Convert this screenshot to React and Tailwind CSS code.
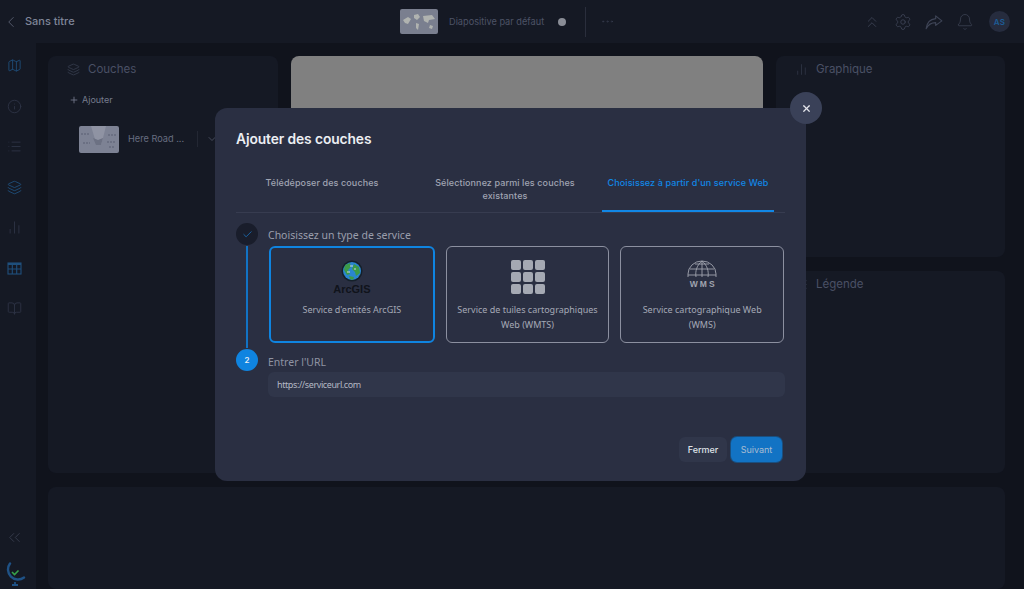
import { Map, Info, List, Layers, ChartNoAxesColumn, BookOpen, ChevronsLeft, ChevronsUp, ChevronLeft, ChevronDown, Settings, Bell, Plus, X, Check, Ellipsis } from "lucide-react";

const sans = "font-['Inter','Liberation_Sans',sans-serif]";
const body = "font-['Noto_Sans','Liberation_Sans',sans-serif]";

const MapThumb = ({ className }) => (
  <svg viewBox="0 0 40 27" className={className} preserveAspectRatio="none">
    <rect width="40" height="27" rx="2" fill="#7d8294" />
    <path d="M12 0h15l-3 12-2 7h-4l-3-9z" fill="#8f93a3" />
    <path d="M14 12l3 7h5l2-7-5 2z" fill="#6c7183" />
    <path d="M2 8h9M29 9h8M4 17h7M28 16h9M30 21h6" stroke="#666b7d" strokeWidth="1.5" strokeDasharray="2 1" />
  </svg>
);

const SlideThumb = () => (
  <svg viewBox="0 0 38 25" className="w-[38px] h-[25px]">
    <rect width="38" height="25" rx="2" fill="#7a7f8f" />
    <path d="M3 11l5-3 3 2-3 5-3-1zM14 6l4-1 2 3-3 3-3-2zM16 14l3 1-1 6-2-2zM23 7l9-1 3 4-6 1-1 3-4-2zM30 16l3 1-1 3-3-1z" fill="#b0b3b0" />
  </svg>
);

const TableIcon = ({ className }) => (
  <svg viewBox="0 0 15 15" className={className} fill="none" stroke="currentColor" strokeWidth="1.1">
    <rect x="1" y="2" width="13" height="11" />
    <path d="M1 3h13" strokeWidth="2" />
    <path d="M1 8h13M5.3 2v11M9.7 2v11" />
  </svg>
);

const sideIcons = [
  { Icon: Map, color: "text-[#1f4f7c]" },
  { Icon: Info, color: "text-[#2e3446]" },
  { Icon: List, color: "text-[#2e3446]" },
  { Icon: Layers, color: "text-[#1f4f7c]" },
  { Icon: ChartNoAxesColumn, color: "text-[#2e3446]" },
  { Icon: TableIcon, color: "text-[#1f4f7c]" },
  { Icon: BookOpen, color: "text-[#2e3446]" },
];

const Sidebar = () => (
  <aside className="w-[36px] shrink-0 bg-[#151924] flex flex-col items-center pt-[15px] pb-[2px] pr-[7px]">
    <div className="flex flex-col gap-[25.5px]">
      {sideIcons.map(({ Icon, color }, i) => (
        <Icon key={i} size={15} strokeWidth={1.4} className={`w-[15px] h-[15px] ${color}`} />
      ))}
    </div>
    <div className="mt-auto flex flex-col items-center gap-[15px]">
      <ChevronsLeft size={19} strokeWidth={1} className="text-[#3d4254]" />
      <svg viewBox="0 0 22 25" className="w-[22px] h-[25px]">
        <path d="M6 1.5a10 10 0 0 0 14 14" fill="none" stroke="#1f5286" strokeWidth="2.4" strokeLinecap="round" />
        <path d="M8 10l2.5 2.5 4-4" fill="none" stroke="#37a24a" strokeWidth="1.6" />
        <path d="M11 20v2M8 23h6" stroke="#1f5286" strokeWidth="1.8" />
      </svg>
    </div>
  </aside>
);

const Panel = ({ className = "", children }) => (
  <div className={`bg-[#151924] rounded-lg ${className}`}>{children}</div>
);

const ServiceCard = ({ active, icon, label }) => (
  <div className={`flex-1 h-[97px] rounded-md flex flex-col items-center ${active ? "border-2 border-[#0f84e0] pt-[12px]" : "border border-[#8c90a0] pt-[13px]"}`}>
    <div className="h-[42px] flex items-start justify-center">{icon}</div>
    <p className={`px-1 text-[9px] leading-[15px] text-[#a5a9b6] text-center whitespace-nowrap ${body}`}>{label}</p>
  </div>
);

const ArcgisIcon = () => (
  <div className="flex flex-col items-center">
    <svg viewBox="0 0 22 22" className="w-[22px] h-[22px]">
      <circle cx="11" cy="11" r="10.5" fill="#15202a" />
      <circle cx="11" cy="11" r="9" fill="#2a86cf" />
      <path d="M4 5l5-2 1 4-3 3 2 4-3 1-3-5zM13 4l5 3 1 6-4 3-1-4-3-3zM8 16l5 1-1 3-3-1z" fill="#3c9a48" />
      <path d="M9 6h3M6 12h3M13 9h2" stroke="#c7d6e2" strokeWidth="1" />
    </svg>
    <span className="mt-[1px] text-[11px] leading-[12px] font-bold text-[#10131b] font-['Liberation_Sans',sans-serif]">ArcGIS</span>
  </div>
);

const TilesIcon = () => (
  <div className="grid grid-cols-3 gap-[2px]">
    {Array.from({ length: 9 }).map((_, i) => (
      <div key={i} className="w-[10px] h-[10px] rounded-[2px] bg-[#a5a9b3]" />
    ))}
  </div>
);

const WmsIcon = () => (
  <div className="flex flex-col items-center">
    <svg viewBox="0 0 30 18" className="w-[30px] h-[18px]" fill="none" stroke="#a0a4af" strokeWidth="0.9">
      <path d="M1 17v-3a14 13 0 0 1 28 0v3" />
      <path d="M9 17c-1-6 1-12 6-16 5 4 7 10 6 16M15 1v16M1 15h28M3 9h24M8 4h14" />
    </svg>
    <span className="mt-[1px] text-[8.5px] leading-[10px] font-bold tracking-[2px] pl-[2px] text-[#a0a4af] font-['Liberation_Sans',sans-serif]">WMS</span>
  </div>
);

const Tab = ({ active, className = "", children }) => (
  <div className={`h-[42px] pt-[6px] text-center text-[9px] leading-[13px] font-medium tracking-[0.1px] ${active ? "text-[#1187e6] border-b-2 border-[#1187e6]" : "text-[#a0a4b2]"} ${className}`}>
    {children}
  </div>
);

const AddLayersModal = () => (
  <div className="absolute left-[215px] top-[108px] w-[591px] h-[373px] rounded-xl bg-[#2a2f42] pl-[21px] pr-[21px] pt-[22px]">
    <h2 className="text-[13.8px] leading-[18px] font-semibold text-[#eceef2] tracking-[-0.1px]">Ajouter des couches</h2>

    <div className="mt-[22px] flex items-stretch border-b border-[#373c50]">
      <Tab className="w-[172px]">Télédéposer des couches</Tab>
      <Tab className="w-[194px]">Sélectionnez parmi les couches<br />existantes</Tab>
      <Tab active className="w-[172px]">Choisissez à partir d'un service Web</Tab>
    </div>

    <div className="flex mt-[10px]">
      <div className="w-[22px] shrink-0 flex flex-col items-center">
        <div className="w-[22px] h-[22px] rounded-full bg-[#191d2b] flex items-center justify-center">
          <Check size={11} strokeWidth={1.6} className="text-[#1a78c8]" />
        </div>
        <div className="w-[2px] h-[102px] bg-[#1273c4] my-[1px]" />
        <div className="w-[22px] h-[22px] rounded-full bg-[#0f84e0] flex items-center justify-center text-[8px] font-semibold text-[#e8eef5]">2</div>
      </div>

      <div className="ml-[10px] flex-1">
        <p className={`text-[10.5px] leading-[14px] mt-[5px] text-[#9a9eac] ${body}`}>Choisissez un type de service</p>
        <div className="mt-[4px] flex gap-[11px] pl-[1px] pr-[1px]">
          <ServiceCard active icon={<ArcgisIcon />} label="Service d'entités ArcGIS" />
          <ServiceCard icon={<TilesIcon />} label={<>Service de tuiles cartographiques<br />Web (WMTS)</>} />
          <ServiceCard icon={<WmsIcon />} label={<>Service cartographique Web<br />(WMS)</>} />
        </div>
        <p className={`mt-[12px] text-[10.5px] leading-[14px] text-[#8f93a2] ${body}`}>Entrer l'URL</p>
        <div className={`mt-[3px] h-[25px] rounded-md bg-[#30364a] flex items-center px-[9px] text-[9px] tracking-[-0.4px] text-[#b4b8c4] ${body}`}>https://serviceurl.com</div>
      </div>
    </div>

    <div className="mt-[40px] flex justify-end gap-[4px] pr-[3px]">
      <button className="w-[48px] h-[25px] rounded-md bg-[#30364a] text-[9px] font-medium text-[#dfe2e8]">Fermer</button>
      <button className="w-[51px] h-[25px] rounded-md bg-[#1273c4] text-[9px] text-[#a9bdd2] ring-1 ring-[#1a4f80]">Suivant</button>
    </div>
  </div>
);

export default function App() {
  return (
    <div className={`relative w-[1024px] h-[589px] overflow-hidden bg-[#10131c] flex flex-col ${sans}`}>
      <header className="h-[43px] shrink-0 bg-[#151924] flex items-center pl-[2px] pr-[14px]">
        <ChevronLeft size={18} strokeWidth={1.2} className="text-[#5a6072]" />
        <span className="ml-[5px] w-[375px] text-[11px] font-medium text-[#7f8598]">Sans titre</span>
        <SlideThumb />
        <span className="ml-[11px] text-[9.2px] text-[#4d5366]">Diapositive par défaut</span>
        <span className="ml-[14px] w-[8px] h-[8px] rounded-full bg-[#8a8d96]" />
        <span className="ml-[19px] w-px h-[30px] bg-[#2a2e3c]" />
        <Ellipsis size={15} strokeWidth={1} className="ml-[14px] text-[#383d4e]" />
        <div className="ml-auto flex items-center gap-[13px] text-[#3e4456]">
          <ChevronsUp size={18} strokeWidth={1.1} />
          <Settings size={18} strokeWidth={1.1} />
          <svg viewBox="0 0 16 16" className="w-[18px] h-[18px]" fill="none" stroke="currentColor" strokeWidth="1">
            <path d="M9.5 2.5L15 7l-5.5 4V8.5C6 8.5 3 10 1 14c.5-5 3.5-8.5 8.5-9z" strokeLinejoin="round" />
          </svg>
          <Bell size={18} strokeWidth={1} />
          <span className="ml-[2px] w-[21px] h-[21px] rounded-full bg-[#262c3e] flex items-center justify-center text-[8px] font-semibold tracking-[0.4px] text-[#1d5c96]">AS</span>
        </div>
      </header>

      <div className="flex flex-1 min-h-0">
        <Sidebar />
        <main className="flex-1 min-w-0 pl-[12px] pr-[19px] pt-[13px] flex flex-col gap-[14px]">
          <div className="flex gap-[13px] h-[417px]">
            <Panel className="w-[230px] shrink-0 pl-[19px] pt-[5px]">
              <div className="flex items-center gap-[8px] text-[#3e4558]">
                <Layers size={13} strokeWidth={1.2} />
                <span className="text-[11.5px] text-[#4a5064]">Couches</span>
              </div>
              <div className="mt-[15px] ml-[2px] flex items-center gap-[3px] text-[#767c8e]">
                <Plus size={10} strokeWidth={2} />
                <span className="text-[9px]">Ajouter</span>
              </div>
              <div className="mt-[19px] ml-[12px] flex items-center">
                <MapThumb className="w-[40px] h-[27px]" />
                <span className="ml-[9px] text-[9.2px] text-[#676d80]">Here Road ...</span>
                <span className="ml-[13px] w-px h-[16px] bg-[#232733]" />
                <ChevronDown size={12} strokeWidth={1.4} className="ml-[8px] text-[#5a6072]" />
              </div>
            </Panel>
            <div className="w-[472px] shrink-0 rounded-lg bg-[#808080]" />
            <div className="flex-1 flex flex-col gap-[14px]">
              <Panel className="h-[201px] shrink-0 pl-[19px] pt-[5px]">
                <div className="flex items-center gap-[8px] text-[#3a4053]">
                  <ChartNoAxesColumn size={13} strokeWidth={1.1} />
                  <span className="text-[11.5px] text-[#4a5064]">Graphique</span>
                </div>
              </Panel>
              <Panel className="flex-1 pl-[19px] pt-[5px]">
                <div className="flex items-center gap-[8px] text-[#3a4053]">
                  <List size={13} strokeWidth={1.1} />
                  <span className="text-[11.5px] text-[#4a5064]">Légende</span>
                </div>
              </Panel>
            </div>
          </div>
          <Panel className="flex-1" />
        </main>
      </div>

      <AddLayersModal />

      <button className="absolute left-[790px] top-[92px] w-[32px] h-[32px] rounded-full bg-[#3a4158] flex items-center justify-center text-[#e4e6ec]">
        <X size={11} strokeWidth={2.6} />
      </button>
    </div>
  );
}
